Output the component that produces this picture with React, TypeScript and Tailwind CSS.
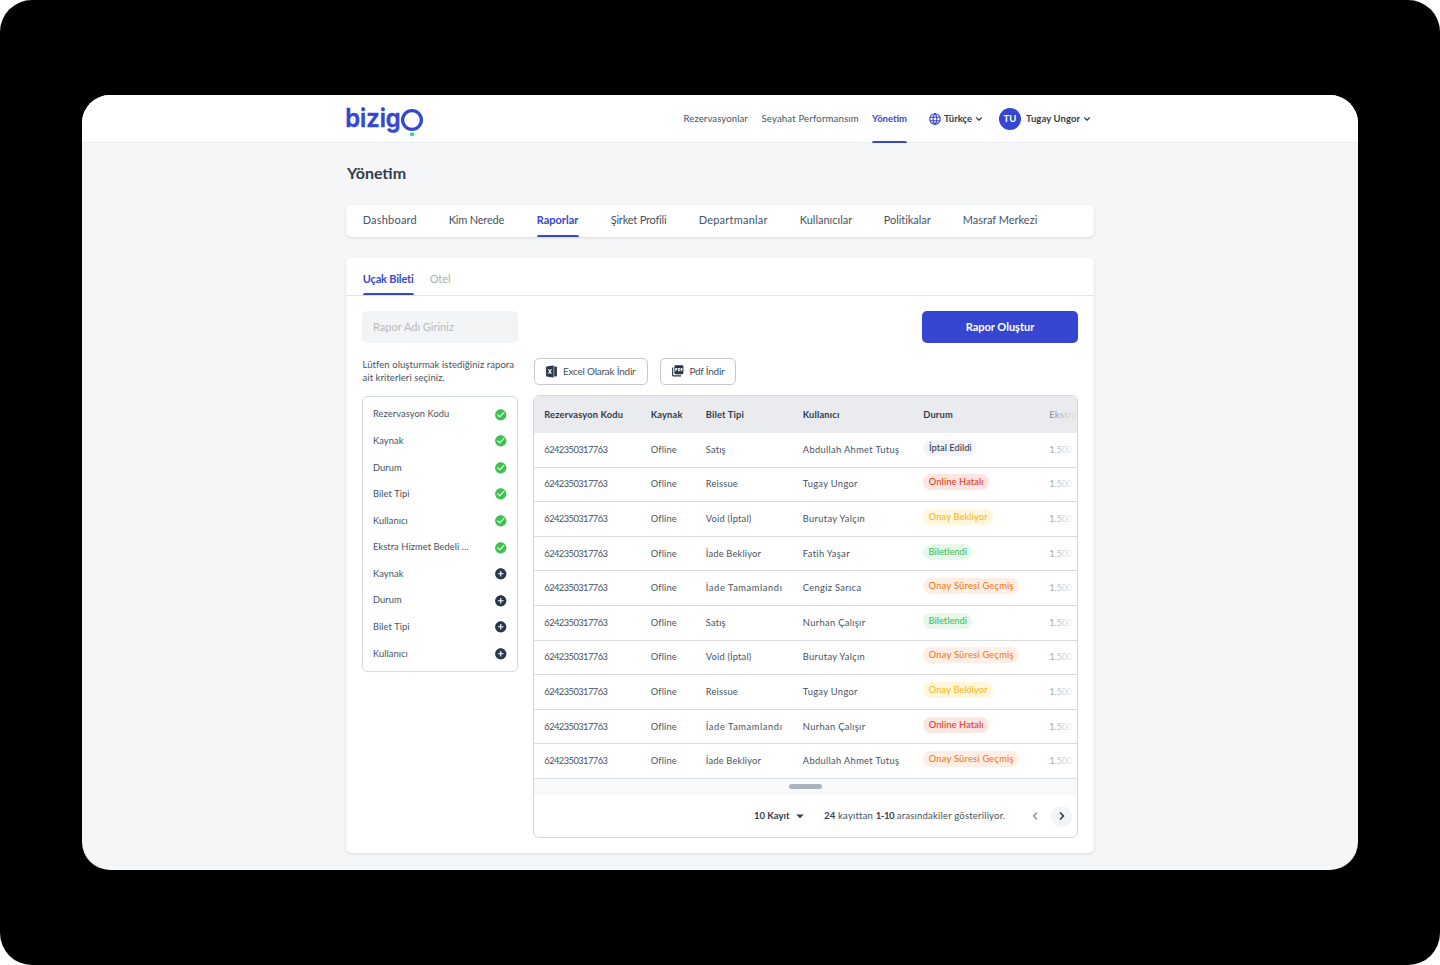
import React from 'react';
import { TbWorld } from 'react-icons/tb';
import { RiFileExcel2Fill } from 'react-icons/ri';
import { MdPictureAsPdf, MdCheckCircle, MdAddCircle, MdArrowDropDown } from 'react-icons/md';
import { ChevronDown, ChevronLeft, ChevronRight } from 'lucide-react';

const navItems = [
    { label: 'Rezervasyonlar', className: 'w-[65px] mr-[13px] tracking-[0.12px]' },
    { label: 'Seyahat Performansım', className: 'w-[98px] mr-[12.5px] tracking-[0.2px]' },
];

const menuItems = [
    { label: 'Dashboard', className: 'w-[54px] mr-8 tracking-[0.2px]' },
    { label: 'Kim Nerede', className: 'w-14 mr-8 tracking-[-0.2px]' },
    { label: 'Raporlar', className: 'w-[42px] mr-8', active: true },
    { label: 'Şirket Profili', className: 'w-14 mr-8 tracking-[-0.2px]' },
    { label: 'Departmanlar', className: 'w-[69px] mr-8 tracking-[0.22px]' },
    { label: 'Kullanıcılar', className: 'w-[52px] mr-8' },
    { label: 'Politikalar', className: 'w-[47px] mr-8 tracking-[-0.05px]' },
    { label: 'Masraf Merkezi', className: 'w-[75px]' },
];

const criteria = [
    { label: 'Rezervasyon Kodu', selected: true },
    { label: 'Kaynak', selected: true },
    { label: 'Durum', selected: true },
    { label: 'Bilet Tipi', selected: true },
    { label: 'Kullanıcı', selected: true },
    { label: 'Ekstra Hizmet Bedeli ...', selected: true },
    { label: 'Kaynak', selected: false },
    { label: 'Durum', selected: false },
    { label: 'Bilet Tipi', selected: false },
    { label: 'Kullanıcı', selected: false },
];

const statusStyles: Record<string, string> = {
    'İptal Edildi': 'bg-[#f2f4f7] text-[#323f4f] w-[54px]',
    'Online Hatalı': 'bg-[#fde5e1] text-[#e33a22] w-[66px] tracking-[0.1px]',
    'Onay Bekliyor': 'bg-[#fff6dc] text-[#fdb71a] w-[70px] tracking-[0.1px]',
    'Biletlendi': 'bg-[#e7f8ea] text-[#45c25a] w-[49px]',
    'Onay Süresi Geçmiş': 'bg-[#ffeee3] text-[#f97a20] w-24 tracking-[0.22px]',
};

const rows = [
    ['Satış', 'Abdullah Ahmet Tutuş', 'İptal Edildi'],
    ['Reissue', 'Tugay Ungor', 'Online Hatalı'],
    ['Void (İptal)', 'Burutay Yalçın', 'Onay Bekliyor'],
    ['İade Bekliyor', 'Fatih Yaşar', 'Biletlendi'],
    ['İade Tamamlandı', 'Cengiz Sarıca', 'Onay Süresi Geçmiş'],
    ['Satış', 'Nurhan Çalışır', 'Biletlendi'],
    ['Void (İptal)', 'Burutay Yalçın', 'Onay Süresi Geçmiş'],
    ['Reissue', 'Tugay Ungor', 'Onay Bekliyor'],
    ['İade Tamamlandı', 'Nurhan Çalışır', 'Online Hatalı'],
    ['İade Bekliyor', 'Abdullah Ahmet Tutuş', 'Onay Süresi Geçmiş'],
];

const gridCols = 'grid grid-cols-[106.5px_55px_97px_120.5px_126px_1fr] pl-[10.3px]';

function Logo() {
    return (
        <svg width="78" height="34" viewBox="0 0 78 34" className="mt-2.5 overflow-visible">
            <text x="-0.8" y="22.4" textLength="55.5" lengthAdjust="spacingAndGlyphs" fill="#3547d0" stroke="#3547d0" strokeWidth="0.5" strokeLinejoin="round" fontSize="25.5" fontWeight="600" fontFamily="Inter">bizig</text>
            <circle cx="66" cy="15" r="9.4" fill="none" stroke="#3547d0" strokeWidth="3.3" />
            <circle cx="66" cy="29.3" r="2.1" fill="#35d09a" />
        </svg>
    );
}

function Header() {
    return (
        <header className="h-12 bg-white border-b border-[#eaecef]">
            <div className="w-[748px] mx-auto flex h-[47px] justify-between">
                <Logo />
                <div className="flex h-full items-center pt-px text-[9.5px] whitespace-nowrap mr-[2px]">
                    {navItems.map((item) => (
                        <span key={item.label} className={`${item.className} text-[#465261]`}>{item.label}</span>
                    ))}
                    <div className="relative flex h-full w-[34.5px] items-center font-bold text-[#3547d0]">
                        Yönetim
                        <span className="absolute -bottom-px left-0 h-0.5 w-full rounded-t bg-[#3547d0]" />
                    </div>
                    <TbWorld size={14} className="ml-[21px] text-[#3547d0]" />
                    <span className="ml-[2.5px] w-[29px] font-bold">Türkçe</span>
                    <ChevronDown size={10} strokeWidth={2.7} className="ml-px" />
                    <span className="ml-[15px] flex size-[22px] items-center justify-center rounded-full bg-[#3547d0] font-bold text-white">TU</span>
                    <span className="ml-[5px] w-[55px] font-bold tracking-[0.1px]">Tugay Ungor</span>
                    <ChevronDown size={10} strokeWidth={2.7} className="ml-px" />
                </div>
            </div>
        </header>
    );
}

function CriteriaPanel() {
    return (
        <aside className="w-[156px]">
            <div className="h-8 rounded-[5px] bg-[#f2f4f5] px-[11px] text-[11px] leading-8 text-[#b5bbc1]">Rapor Adı Giriniz</div>
            <p className="mt-[15px] pl-[0.5px] text-[9.5px] leading-[13.4px] tracking-[0.07px] whitespace-nowrap text-[#465261]">
                Lütfen oluşturmak istediğiniz rapora<br />ait kriterleri seçiniz.
            </p>
            <div className="mt-[11.2px] h-[276px] rounded-[5px] border border-[#d5dadd] pt-1 pr-2.5 pl-2.5">
                {criteria.map((item, i) => (
                    <div key={i} className="flex h-[26.6px] items-center justify-between text-[9.3px] tracking-[0.08px] text-[#465261]">
                        <span>{item.label}</span>
                        {item.selected
                            ? <MdCheckCircle size={13.5} className="text-[#3cc251]" />
                            : <MdAddCircle size={13.5} className="text-[#27364a]" />}
                    </div>
                ))}
            </div>
        </aside>
    );
}

function ReportTable() {
    return (
        <div className="relative mt-[10px] h-[443px] overflow-hidden rounded-md border border-[#d3d7dc]">
            <div className={`${gridCols} h-[37px] items-center bg-[#e9ebee] text-[9.3px] font-bold tracking-[0.16px]`}>
                <span>Rezervasyon Kodu</span>
                <span>Kaynak</span>
                <span>Bilet Tipi</span>
                <span>Kullanıcı</span>
                <span>Durum</span>
                <span>Ekstra</span>
            </div>
            {rows.map(([type, user, status], i) => (
                <div key={i} className={`${gridCols} h-[34.6px] items-center border-b border-[#d9dde0] text-[9.3px] text-[#465261]`}>
                    <span className="tracking-[-0.54px]">6242350317763</span>
                    <span className="tracking-[0.15px]">Ofline</span>
                    <span className={type === 'İade Tamamlandı' ? 'tracking-[0.6px]' : 'tracking-[0.18px]'}>{type}</span>
                    <span className="tracking-[0.34px]">{user}</span>
                    <span className={`${statusStyles[status]} mb-1 flex h-4 items-center justify-center rounded-full font-medium whitespace-nowrap`}>{status}</span>
                    <span className="tracking-[-0.15px]">1.500</span>
                </div>
            ))}
            <div className="absolute top-0 right-0 h-[37px] w-[30px] bg-linear-to-r from-[#e9ebee]/50 to-[#e9ebee]" />
            <div className="absolute top-[37px] right-0 flex w-[30px] flex-col">
                {rows.map((_, i) => (
                    <div key={i} className="h-[34.6px] pb-px">
                        <div className="h-full bg-linear-to-r from-white/40 to-white" />
                    </div>
                ))}
            </div>
            <div className="flex h-4 items-center justify-center bg-[#f7f9fa]">
                <div className="h-[5px] w-[33px] rounded-full bg-[#acb3bd]" />
            </div>
            <div className="flex h-[43px] items-center justify-end pr-[5px] text-[9.5px]">
                <span className="font-bold">10 Kayıt</span>
                <MdArrowDropDown size={18} className="ml-[1.5px]" />
                <span className="ml-[15px] w-[184px] tracking-[0.2px] whitespace-nowrap text-[#465261]">
                    <b className="text-[#323f4f]">24</b> kayıttan <b className="text-[#323f4f] tracking-[-0.4px]">1-10</b> arasındakiler gösteriliyor.
                </span>
                <ChevronLeft size={12} strokeWidth={2.5} className="ml-[21px] text-[#7b8490]" />
                <span className="ml-[10px] flex size-[21px] items-center justify-center rounded-full bg-[#f2f4f6]">
                    <ChevronRight size={12} strokeWidth={3.5} />
                </span>
            </div>
        </div>
    );
}

export default function App() {
    return (
        <div className="bg-white">
            <div className="h-[965px] rounded-[32px] bg-black px-[82px] pt-[95px] font-['Lato',sans-serif] text-[#2f3c4c]">
                <div className="h-[775px] overflow-hidden rounded-[28px] bg-[#f4f6f8]">
                    <Header />
                    <main className="w-[748px] mx-auto">
                        <h1 className="pt-[18px] pl-px text-[16px] leading-6 font-bold">Yönetim</h1>
                        <nav className="mt-5 flex h-8 rounded-[5px] bg-white px-[16.7px] text-[11px] whitespace-nowrap shadow-sm">
                            {menuItems.map((item) => (
                                <div key={item.label} className={`${item.className} relative flex h-full items-center pb-[2px] ${item.active ? 'font-bold text-[#3547d0]' : 'text-[#465261]'}`}>
                                    {item.label}
                                    {item.active && <span className="absolute bottom-0 left-0 h-0.5 w-full rounded-t bg-[#3547d0]" />}
                                </div>
                            ))}
                        </nav>
                        <section className="mt-[21px] h-[595px] rounded-[5px] bg-white shadow-sm">
                            <div className="flex h-[38px] gap-4 border-b border-[#e1e4e7] px-[16.7px] text-[11px] leading-[41px] whitespace-nowrap">
                                <div className="relative w-[51px] font-bold tracking-[-0.17px] text-[#3547d0]">
                                    Uçak Bileti
                                    <span className="absolute bottom-0 left-0 h-0.5 w-full rounded-t bg-[#3547d0]" />
                                </div>
                                <div className="tracking-[-0.1px] text-[#a9afb6]">Otel</div>
                            </div>
                            <div className="flex gap-[15px] px-4 pt-[15px]">
                                <CriteriaPanel />
                                <div className="w-[545px]">
                                    <div className="ml-auto h-8 w-[156px] rounded-[5px] bg-[#3547d0] text-center text-[11px] leading-[31px] font-bold text-white">Rapor Oluştur</div>
                                    <div className="mt-[15px] flex gap-3 pl-px text-[10px] tracking-[-0.24px] text-[#465261]">
                                        <button className="flex h-[27px] w-[114px] items-center rounded-[5px] border border-[#c3c8cd] pb-px pl-[10px]">
                                            <RiFileExcel2Fill size={13} className="mr-[5px] text-[#27364a]" />Excel Olarak İndir
                                        </button>
                                        <button className="flex h-[27px] w-[76px] items-center rounded-[5px] border border-[#c3c8cd] pb-px pl-[10px]">
                                            <MdPictureAsPdf size={13.5} className="mr-[5px] text-[#27364a]" />Pdf İndir
                                        </button>
                                    </div>
                                    <ReportTable />
                                </div>
                            </div>
                        </section>
                    </main>
                </div>
            </div>
        </div>
    );
}
